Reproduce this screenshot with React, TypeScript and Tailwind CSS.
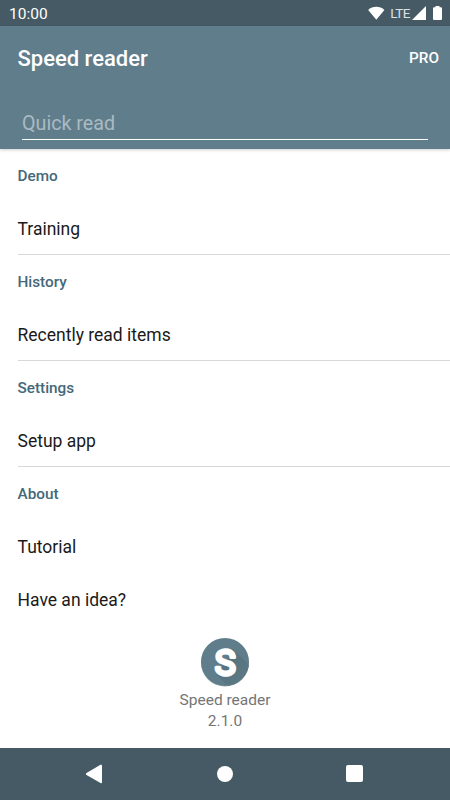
import React from 'react';

interface Section {
  title: string;
  items: string[];
}

const sections: Section[] = [
  { title: 'Demo', items: ['Training'] },
  { title: 'History', items: ['Recently read items'] },
  { title: 'Settings', items: ['Setup app'] },
  { title: 'About', items: ['Tutorial', 'Have an idea?'] },
];

const StatusBar: React.FC = () => (
  <div className="flex h-[26px] shrink-0 items-center justify-between bg-[#455a64] pl-[9px] pr-2 text-white">
    <span className="mt-[3px] text-[15.5px] leading-none">10:00</span>
    <div className="flex items-center">
      <svg className="h-[14px] w-[17px]" viewBox="0 0 17 14" fill="currentColor">
        <path d="M8.3 13.8 0.2 4C4.6 -0.4 12 -0.4 16.4 4Z" />
      </svg>
      <span className="ml-[5px] mt-px text-[13.5px] leading-none tracking-[-0.5px] text-[#dbe1e4]">LTE</span>
      <svg className="ml-[2px] h-[14px] w-[14px]" viewBox="0 0 14 14" fill="currentColor">
        <path d="M14 0v14H0Z" />
      </svg>
      <svg className="ml-[7px] h-[14px] w-[9px]" viewBox="0 0 9 14" fill="currentColor">
        <path d="M2.5 0h4v1.2H8a1 1 0 0 1 1 1V13a1 1 0 0 1-1 1H1a1 1 0 0 1-1-1V2.2a1 1 0 0 1 1-1h1.5Z" />
      </svg>
    </div>
  </div>
);

const Header: React.FC = () => (
  <header className="flex h-[123px] shrink-0 flex-col bg-[#607d8b] text-white shadow-[0_1px_3px_rgba(0,0,0,0.2)]">
    <div className="flex h-[64px] items-center justify-between pl-[17.5px] pr-[11px] pt-px">
      <h1 className="text-[22px] font-medium leading-none">Speed reader</h1>
      <button className="text-[15.3px] font-medium leading-none">PRO</button>
    </div>
    <div className="mx-[22px] mt-[11px] flex h-[39px] items-end border-b border-white pb-[5px]">
      <span className="text-[19.7px] leading-none text-[#aabac2]">Quick read</span>
    </div>
  </header>
);

const Logo: React.FC = () => (
  <svg className="h-[50px] w-[50px]" viewBox="0 0 50 50">
    <defs>
      <clipPath id="disc">
        <circle cx="25" cy="25" r="24" />
      </clipPath>
      <linearGradient id="shade" x1="0" y1="0" x2="1" y2="1">
        <stop offset="0" stopColor="#536f7c" />
        <stop offset="1" stopColor="#5f7c89" />
      </linearGradient>
    </defs>
    <circle cx="25" cy="25.7" r="24" fill="#b9c2c6" />
    <circle cx="25" cy="25" r="24" fill="#607d8b" />
    <path d="M33 12 55 34V54H33L17 38Z" fill="url(#shade)" clipPath="url(#disc)" />
    <text
      transform="translate(25.3 38) scale(0.98 1)"
      textAnchor="middle"
      className="font-['Roboto',sans-serif] text-[36px] font-normal"
      fill="#fff"
      stroke="#fff"
      strokeWidth="3.4"
      strokeLinejoin="round"
    >
      S
    </text>
  </svg>
);

const App: React.FC = () => {
  return (
    <div className="flex h-screen flex-col overflow-hidden bg-white font-['Roboto',sans-serif]">
      <StatusBar />
      <Header />

      {/* Menu */}
      <main className="grow">
        {sections.map((section) => (
          <section key={section.title} className="ml-[17.5px] border-b border-[#d8d8d8] last-of-type:border-b-0">
            <h2 className="flex h-[52.6px] items-center pt-[2px] text-[15.3px] font-medium text-[#44687a]">
              {section.title}
            </h2>
            {section.items.map((item) => (
              <div key={item} className="flex h-[52.5px] items-center pt-[2px] text-[17.5px] text-[#1a1a1a]">
                {item}
              </div>
            ))}
          </section>
        ))}

        {/* App info */}
        <div className="mt-[12.3px] flex flex-col items-center text-[15.5px] leading-[21px] text-[#757575]">
          <Logo />
          <p className="mt-[3px]">Speed reader</p>
          <p>2.1.0</p>
        </div>
      </main>

      {/* Navigation bar */}
      <nav className="grid h-[52.5px] shrink-0 grid-cols-[165px_1fr_165px] items-center bg-[#455a64] text-white">
        <svg className="ml-[85px] h-5 w-[18px]" viewBox="0 0 18 20" fill="currentColor">
          <path d="M15.5 0.8Q17 0.2 17 1.8V18.2Q17 19.8 15.5 19L1.5 11Q0 10 1.5 9Z" />
        </svg>
        <span className="h-4 w-4 justify-self-center rounded-full bg-white" />
        <span className="ml-[61px] h-[17px] w-[17px] rounded-[2px] bg-white" />
      </nav>
    </div>
  );
};

export default App;
